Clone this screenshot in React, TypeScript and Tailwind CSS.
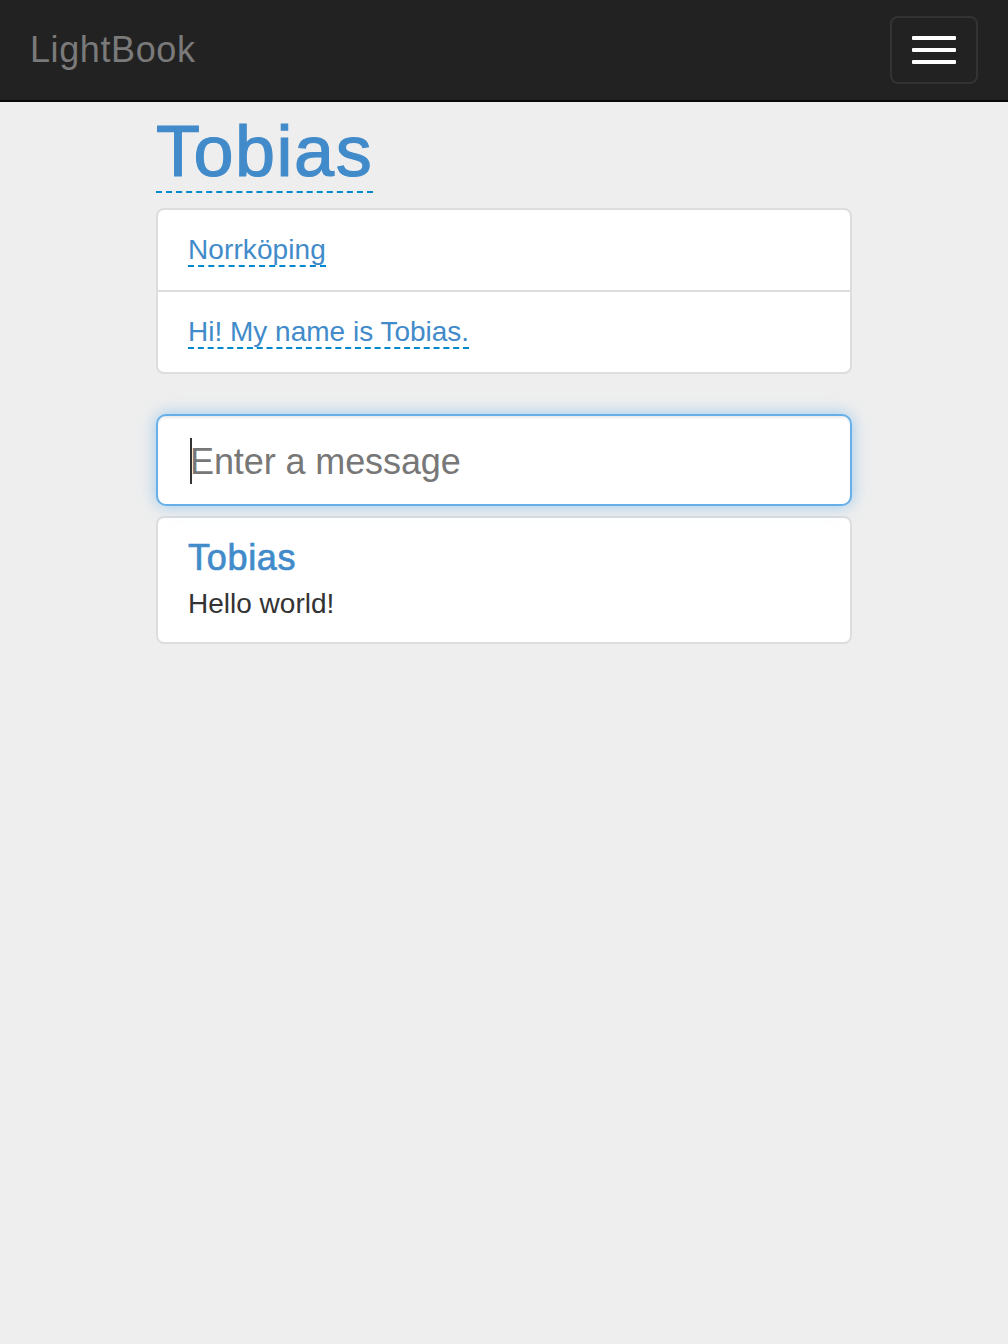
import React from "react";

export default function App() {
  const font = { fontFamily: '"Liberation Sans", Arial, sans-serif' };
  return (
    <div className="min-h-[1344px] bg-[#eeeeee]" style={font}>
      <nav className="h-[102px] bg-[#222222] border-b-2 border-[#080808] flex items-start justify-between">
        <a className="px-[30px] py-[30px] text-[36px] leading-[40px] text-[#7a7a7a] tracking-[0.6px]">LightBook</a>
        <button className="mt-[16px] mr-[30px] w-[88px] h-[68px] border-2 border-[#333333] rounded-[8px] flex flex-col items-center justify-center gap-[8px]">
          <span className="block w-[44px] h-[4px] bg-white rounded-[1px]" />
          <span className="block w-[44px] h-[4px] bg-white rounded-[1px]" />
          <span className="block w-[44px] h-[4px] bg-white rounded-[1px]" />
        </button>
      </nav>
      <main className="w-[696px] mx-auto">
        <h1 className="mt-[10px] mb-[17px] text-[72px] leading-[79px] font-normal text-[#428bca] tracking-[1.5px] [-webkit-text-stroke:1.2px_#428bca]">
          <span className="border-b-2 border-dashed border-[#0088cc]">Tobias</span>
        </h1>
        <div className="bg-white border-2 border-[#dddddd] rounded-[8px]">
          <div className="px-[30px] py-[20px] text-[28px] leading-[40px] text-[#428bca]">
            <span className="border-b-2 border-dashed border-[#0088cc] tracking-[0.1px]">Norrköping</span>
          </div>
          <div className="px-[30px] py-[20px] text-[28px] leading-[40px] text-[#428bca] border-t-2 border-[#dddddd]">
            <span className="border-b-2 border-dashed border-[#0088cc]">Hi! My name is Tobias.</span>
          </div>
        </div>
        <div className="mt-[40px] relative h-[92px] bg-white border-2 border-[#66afe9] rounded-[10px] shadow-[inset_0_2px_2px_rgba(0,0,0,0.075),0_0_16px_rgba(102,175,233,0.6)] px-[32px] flex items-center">
          <span className="mt-[4px] text-[36px] leading-[48px] text-[#777777] tracking-[-0.1px]">Enter a message</span>
          <span className="absolute left-[32px] top-[22px] w-[2px] h-[46px] bg-[#333333]" />
        </div>
        <div className="mt-[10px] bg-white border-2 border-[#dddddd] rounded-[8px] px-[30px] pt-[20px] pb-[18px]">
          <h4 className="text-[36px] leading-[40px] font-normal text-[#428bca] tracking-[0.7px] [-webkit-text-stroke:0.7px_#428bca]">Tobias</h4>
          <p className="mt-[6px] text-[28px] leading-[40px] text-[#333333]">Hello world!</p>
        </div>
      </main>
    </div>
  );
}
